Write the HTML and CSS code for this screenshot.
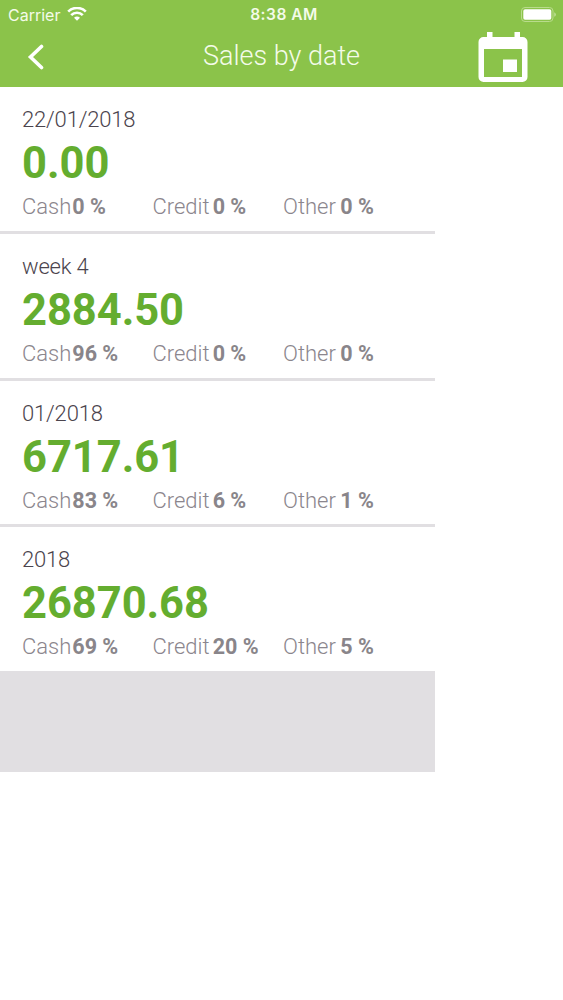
FILE: index.html
```html
<!DOCTYPE html>
<html lang="en">
<head>
<meta charset="utf-8">
<title>Sales by date</title>
<link rel="stylesheet" href="styles.css">
</head>
<body>
<header class="header">
  <div class="status">
    <div class="carrier"><span>Carrier</span>
      <svg class="wifi" viewBox="0 0 20 14"><path d="M1.200 4.600a12.600 12.600 0 0 1 17.600 0M4.200 8.100a8.300 8.300 0 0 1 11.600 0" fill="none" stroke="#fff" stroke-width="2.700"/><path d="M7 10.800a4.400 4.400 0 0 1 6 0L10 13.800z" fill="#fff"/></svg>
    </div>
    <div class="time">8:38 AM</div>
    <svg class="battery" viewBox="0 0 35 15"><rect x=".5" y=".5" width="31.5" height="14" rx="3.5" fill="none" stroke="#b9db8c"/><rect x="2.3" y="2.3" width="28" height="10.4" rx="1.8" fill="#fff"/><path d="M33.3 5.2v4.6q1.5-.7 1.5-2.3t-1.500-2.300z" fill="#c3e29c"/></svg>
  </div>
  <div class="nav">
    <svg class="back" viewBox="0 0 18 28"><path d="M15.500 3.500 4.500 14l11 10.500" fill="none" stroke="#fff" stroke-width="3.6" stroke-linecap="round"/></svg>
    <h1 class="title">Sales by date</h1>
    <svg class="calendar" viewBox="0 0 50 51"><path fill="#fff" fill-rule="evenodd" d="M9 0h5.500v5h22V0H42v5h2.500a5 5 0 0 1 5 5v35a5 5 0 0 1-5 5H5.500a5 5 0 0 1-5-5V10a5 5 0 0 1 5-5H9zM6 17v28h38V17zM25 27.500h14V40H25z"/></svg>
  </div>
</header>
<main class="list">
  <section class="card"><div class="period">22/01/2018</div><div class="amount">0.00</div><div class="split"><div class="cell">Cash<b class="p1">0 %</b></div><div class="cell">Credit<b class="p2">0 %</b></div><div class="cell">Other<b class="p3">0 %</b></div></div></section>
  <section class="card"><div class="period">week 4</div><div class="amount">2884.50</div><div class="split"><div class="cell">Cash<b class="p1">96 %</b></div><div class="cell">Credit<b class="p2">0 %</b></div><div class="cell">Other<b class="p3">0 %</b></div></div></section>
  <section class="card"><div class="period">01/2018</div><div class="amount">6717.61</div><div class="split"><div class="cell">Cash<b class="p1">83 %</b></div><div class="cell">Credit<b class="p2">6 %</b></div><div class="cell">Other<b class="p3">1 %</b></div></div></section>
  <section class="card"><div class="period">2018</div><div class="amount">26870.68</div><div class="split"><div class="cell">Cash<b class="p1">69 %</b></div><div class="cell">Credit<b class="p2">20 %</b></div><div class="cell">Other<b class="p3">5 %</b></div></div></section>
  <div class="filler"></div>
</main>
</body>
</html>
```
FILE: styles.css
```css
* { box-sizing: border-box; }
body { margin: 0; background: #fff; font-family: Roboto, sans-serif; }
.header { height: 87px; background: #8bc34a; color: #f4fbe9; }
.status { height: 28px; display: grid; grid-template-columns: 1fr auto 1fr; align-items: center; padding: 0 7px 0 8px; font: 16px/28px Inter, sans-serif; }
.carrier { display: flex; align-items: center; gap: 7px; }
.wifi { width: 20px; height: 14px; margin-top: -1px; }
.time { font-weight: 600; font-size: 15.5px; line-height: 28px; letter-spacing: .5px; padding: 1px 0 0 4px; }
.battery { width: 35px; height: 15px; justify-self: end; margin-top: -1px; }
.nav { height: 59px; display: grid; grid-template-columns: 100px 1fr 100px; align-items: start; }
.back { width: 18px; height: 28px; margin: 15px 0 0 26px; }
.title { margin: 0; text-align: center; font-size: 27px; font-weight: 300; line-height: 57px; }
.calendar { width: 50px; height: 51px; margin: 4px 0 0 15px; }
.list { width: 435px; }
.card { height: 146.8px; padding: 19px 22px 0; border-bottom: 3px solid #e1dfe2; }
.card:nth-child(4) { height: 144px; border: 0; }
.period { font-size: 22px; font-weight: 300; line-height: 28px; color: #4b444d; letter-spacing: -.18px; }
.amount { font-size: 43.5px; font-weight: 700; line-height: 60px; height: 58px; color: #64ad2f; letter-spacing: -.05px; }
.split { display: grid; grid-template-columns: 130.5px 130.5px 1fr; font-size: 22px; font-weight: 300; line-height: 30px; color: #8b868d; }
.cell { display: flex; white-space: nowrap; }
.cell b { font-size: 21.5px; font-weight: 700; color: #89858a; }
.p1 { margin-left: 1px; }
.p2 { margin-left: 3px; }
.p3 { margin-left: 4.5px; }
.filler { height: 100.5px; background: #e1dfe2; }
```
